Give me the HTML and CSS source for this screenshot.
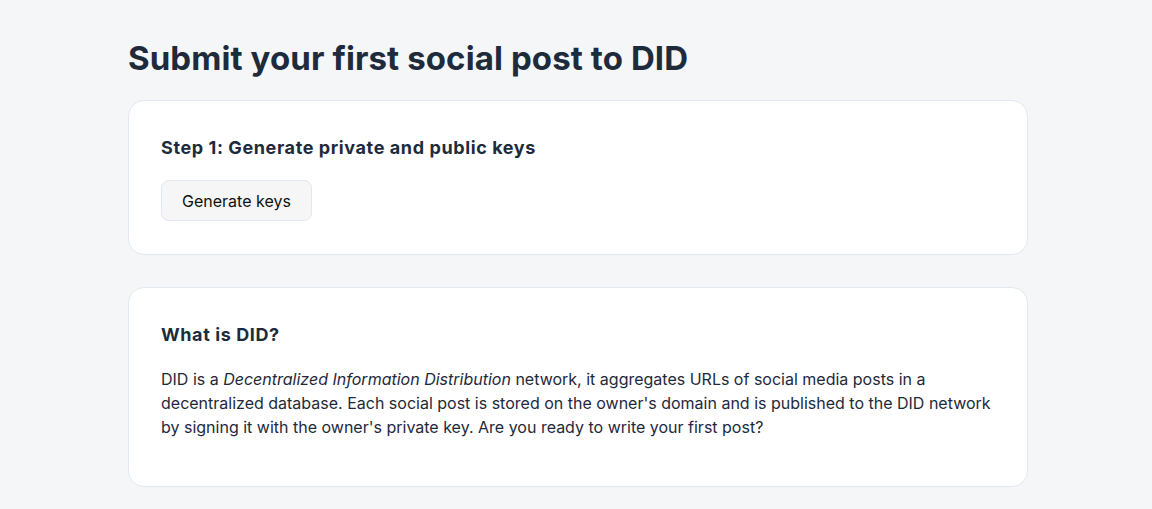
FILE: index.html
```html
<!DOCTYPE html>
<html lang="en">
<head>
<meta charset="UTF-8">
<meta name="viewport" content="width=device-width, initial-scale=1.0">
<title>DID</title>
<link rel="stylesheet" href="styles.css">
</head>
<body>
  <main class="container">
    <h1 class="page-title">Submit your first social post to DID</h1>

    <section class="card">
      <h2 class="card-title">Step 1: Generate private and public keys</h2>
      <button type="button" class="btn">Generate keys</button>
    </section>

    <section class="card">
      <h2 class="card-title">What is DID?</h2>
      <p class="card-text">
        DID is a <em>Decentralized Information Distribution</em> network, it aggregates URLs of social media posts in a
        decentralized database. Each social post is stored on the owner's domain and is published to the DID network
        by signing it with the owner's private key. Are you ready to write your first post?
      </p>
    </section>
  </main>
</body>
</html>
```

FILE: styles.css
```css
body {
  margin: 0;
  font-family: Inter, 'Noto Sans', sans-serif;
  background-color: #f4f6f8;
  color: #1e293b;
}

.container {
  width: 900px;
  margin: 0 auto;
  padding: 36px 0 0 4px;
  display: flex;
  flex-direction: column;
  gap: 32px;
}

.page-title {
  font-size: 33px;
  font-weight: 700;
  letter-spacing: 0.1px;
  line-height: 44px;
  margin: 0 0 -12px;
  color: #1e2b3b;
}

.card {
  background-color: #fff;
  border: 1px solid #e2e8f0;
  border-radius: 16px;
  padding: 33px 32px;
}

.card-title {
  font-size: 18px;
  font-weight: 700;
  letter-spacing: 0.6px;
  line-height: 28px;
  margin: 0 0 18px;
  color: #1e2b3b;
}

.btn {
  display: block;
  font-family: Inter, 'Noto Sans', sans-serif;
  font-size: 16px;
  color: #111;
  background-color: #f6f6f6;
  border: 1px solid #e2e8f0;
  border-radius: 8px;
  padding: 0 20px;
  height: 41px;
  cursor: pointer;
}

.card-text {
  font-size: 16px;
  line-height: 24px;
  margin: 0 0 14px;
}
```
